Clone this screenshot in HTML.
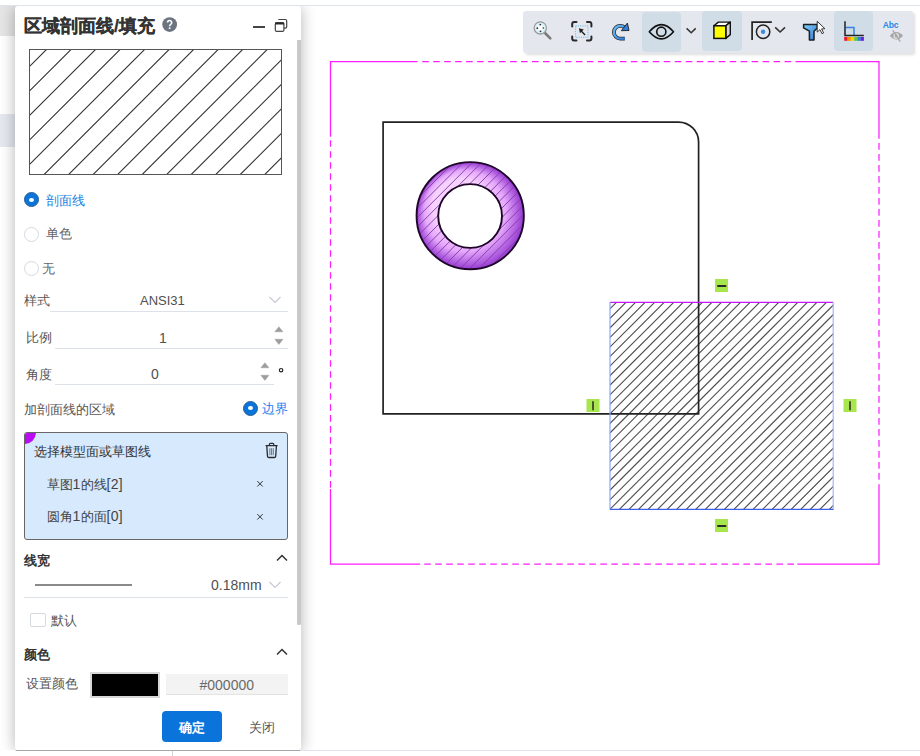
<!DOCTYPE html>
<html><head><meta charset="utf-8">
<style>
*{margin:0;padding:0;box-sizing:border-box}
html,body{width:920px;height:756px;overflow:hidden;background:#fff;font-family:"Liberation Sans",sans-serif;color:#333}
.a{position:absolute;white-space:nowrap}
#topline{left:0;top:0;width:920px;height:6px;background:#fff;border-bottom:1px solid #dfe4ea;z-index:5}
#botline{left:15px;top:750px;width:905px;height:6px;background:#fff;border-top:1px solid #e1e2ea;z-index:5}
#botwhite{left:0;top:750px;width:15px;height:6px;background:#fff;z-index:5}
#botdark{left:16px;top:750px;width:284px;height:1px;background:#a4a6aa;z-index:6}
#vline{left:172px;top:751px;width:1px;height:5px;background:#d4d4d4}
#sb1{left:0;top:6px;width:20px;height:30px;background:#e5e5e5}
#sb2{left:0;top:114px;width:20px;height:33px;background:#e5e8ef}
#panel{left:15px;top:6px;width:286px;height:744px;background:#fff;border-radius:3px;box-shadow:0 1px 15px rgba(0,0,0,.3)}
#toolbar{left:523px;top:11px;width:389.5px;height:42px;background:#e4e7ee;border-radius:3px 2px 2px 3px;box-shadow:2px 2px 3px rgba(0,0,0,.13)}
.hl{position:absolute;background:#d0dce6;border-radius:4px}
.c{font-size:13px;line-height:16px;color:#555}
.l{font-size:14px;line-height:16px;color:#505050}
.b{font-weight:bold;color:#333}
.ul{position:absolute;height:1px;background:#dde2ea}
.radio{position:absolute;width:15px;height:15px;border-radius:50%;border:1px solid #d5d9e0;background:#fff}
.radio.on{background:#0a74da;border:1px solid #2a5f94}
.radio.on:after{content:"";position:absolute;left:4.1px;top:4.6px;width:4.8px;height:4px;border-radius:50%;background:#fff}
.chev{position:absolute}
.l14{font-size:14px;letter-spacing:0.3px}
</style></head><body>
<div class="a" id="topline"></div>
<div class="a" id="sb1"></div>
<div class="a" id="sb2"></div>

<!-- canvas -->
<svg class="a" style="left:0;top:0" width="920" height="756">
  <defs>
    <clipPath id="csq"><rect x="610" y="302.4" width="223.2" height="207"/></clipPath>
    <clipPath id="cdn"><path d="M470.2 162.1 A53.6 53.6 0 1 1 470.2 269.3 A53.6 53.6 0 1 1 470.2 162.1 Z M470.1 184.1 A31.9 31.9 0 1 0 470.1 247.9 A31.9 31.9 0 1 0 470.1 184.1 Z" clip-rule="evenodd"/></clipPath>
    <radialGradient id="dg" cx="470" cy="216" r="54" gradientUnits="userSpaceOnUse" fx="450" fy="196">
      <stop offset="0.5" stop-color="#f7d2ff"/>
      <stop offset="0.75" stop-color="#e6a8fb"/>
      <stop offset="1" stop-color="#9536d2"/>
    </radialGradient>
  </defs>
  <g stroke="#ff1eff" stroke-width="1.25" fill="none">
    <path d="M330.5 136.7 V61.5 H417.4 M795.5 61.5 H879 V138.8 M879 484.2 V564 H797.4 M420.2 564 H330.5 V488.9"/>
    <path d="M422.20 61.50H428.80M433.18 61.50H439.78M444.16 61.50H450.76M455.14 61.50H461.74M466.12 61.50H472.72M477.10 61.50H483.70M488.08 61.50H494.68M499.06 61.50H505.66M510.04 61.50H516.64M521.02 61.50H527.62M532.00 61.50H538.60M542.98 61.50H549.58M553.96 61.50H560.56M564.94 61.50H571.54M575.92 61.50H582.52M586.90 61.50H593.50M597.88 61.50H604.48M608.86 61.50H615.46M619.84 61.50H626.44M630.82 61.50H637.42M641.80 61.50H648.40M652.78 61.50H659.38M663.76 61.50H670.36M674.74 61.50H681.34M685.72 61.50H692.32M696.70 61.50H703.30M707.68 61.50H714.28M718.66 61.50H725.26M729.64 61.50H736.24M740.62 61.50H747.22M751.60 61.50H758.20M762.58 61.50H769.18M773.56 61.50H780.16M784.54 61.50H791.14M879.00 143.10V149.70M879.00 154.10V160.70M879.00 165.10V171.70M879.00 176.10V182.70M879.00 187.10V193.70M879.00 198.10V204.70M879.00 209.10V215.70M879.00 220.10V226.70M879.00 231.10V237.70M879.00 242.10V248.70M879.00 253.10V259.70M879.00 264.10V270.70M879.00 275.10V281.70M879.00 286.10V292.70M879.00 297.10V303.70M879.00 308.10V314.70M879.00 319.10V325.70M879.00 330.10V336.70M879.00 341.10V347.70M879.00 352.10V358.70M879.00 363.10V369.70M879.00 374.10V380.70M879.00 385.10V391.70M879.00 396.10V402.70M879.00 407.10V413.70M879.00 418.10V424.70M879.00 429.10V435.70M879.00 440.10V446.70M879.00 451.10V457.70M879.00 462.10V468.70M879.00 473.10V479.70M424.20 564.00H430.80M435.21 564.00H441.81M446.21 564.00H452.81M457.22 564.00H463.82M468.22 564.00H474.82M479.23 564.00H485.83M490.24 564.00H496.84M501.24 564.00H507.84M512.25 564.00H518.85M523.25 564.00H529.85M534.26 564.00H540.86M545.27 564.00H551.87M556.27 564.00H562.87M567.28 564.00H573.88M578.28 564.00H584.88M589.29 564.00H595.89M600.30 564.00H606.90M611.30 564.00H617.90M622.31 564.00H628.91M633.31 564.00H639.91M644.32 564.00H650.92M655.33 564.00H661.93M666.33 564.00H672.93M677.34 564.00H683.94M688.34 564.00H694.94M699.35 564.00H705.95M710.36 564.00H716.96M721.36 564.00H727.96M732.37 564.00H738.97M743.37 564.00H749.97M754.38 564.00H760.98M765.39 564.00H771.99M776.39 564.00H782.99M787.40 564.00H794.00M330.50 140.20V146.80M330.50 151.20V157.80M330.50 162.19V168.79M330.50 173.19V179.79M330.50 184.19V190.79M330.50 195.19V201.78M330.50 206.18V212.78M330.50 217.18V223.78M330.50 228.18V234.78M330.50 239.17V245.77M330.50 250.17V256.77M330.50 261.17V267.77M330.50 272.16V278.76M330.50 283.16V289.76M330.50 294.16V300.76M330.50 305.15V311.75M330.50 316.15V322.75M330.50 327.15V333.75M330.50 338.15V344.75M330.50 349.14V355.74M330.50 360.14V366.74M330.50 371.14V377.74M330.50 382.13V388.73M330.50 393.13V399.73M330.50 404.13V410.73M330.50 415.12V421.73M330.50 426.12V432.72M330.50 437.12V443.72M330.50 448.12V454.72M330.50 459.11V465.71M330.50 470.11V476.71M330.50 481.11V487.71"/>
  </g>
  <path clip-path="url(#csq)" d="M394.86 514.40L611.86 297.40M404.40 514.40L621.40 297.40M413.94 514.40L630.94 297.40M423.49 514.40L640.49 297.40M433.03 514.40L650.03 297.40M442.58 514.40L659.58 297.40M452.12 514.40L669.12 297.40M461.67 514.40L678.67 297.40M471.22 514.40L688.22 297.40M480.76 514.40L697.76 297.40M490.30 514.40L707.30 297.40M499.85 514.40L716.85 297.40M509.39 514.40L726.39 297.40M518.94 514.40L735.94 297.40M528.49 514.40L745.49 297.40M538.03 514.40L755.03 297.40M547.57 514.40L764.57 297.40M557.12 514.40L774.12 297.40M566.67 514.40L783.67 297.40M576.21 514.40L793.21 297.40M585.75 514.40L802.75 297.40M595.30 514.40L812.30 297.40M604.84 514.40L821.84 297.40M614.39 514.40L831.39 297.40M623.94 514.40L840.94 297.40M633.48 514.40L850.48 297.40M643.02 514.40L860.02 297.40M652.57 514.40L869.57 297.40M662.11 514.40L879.11 297.40M671.66 514.40L888.66 297.40M681.21 514.40L898.21 297.40M690.75 514.40L907.75 297.40M700.29 514.40L917.29 297.40M709.84 514.40L926.84 297.40M719.38 514.40L936.38 297.40M728.93 514.40L945.93 297.40M738.48 514.40L955.48 297.40M748.02 514.40L965.02 297.40M757.56 514.40L974.56 297.40M767.11 514.40L984.11 297.40M776.65 514.40L993.65 297.40M786.20 514.40L1003.20 297.40M795.75 514.40L1012.75 297.40M805.29 514.40L1022.29 297.40M814.83 514.40L1031.84 297.40M824.38 514.40L1041.38 297.40M833.92 514.40L1050.92 297.40" stroke="#4e4e4e" stroke-width="1.12" fill="none"/>
  <path d="M383.1 122.1 H678.6 A20 20 0 0 1 698.6 142.1 V413.8 H383.1 Z" fill="none" stroke="#222" stroke-width="1.7"/>
  <line x1="610" y1="302.4" x2="833" y2="302.4" stroke="#c814ff" stroke-width="1.3"/>
  <line x1="610" y1="302" x2="610" y2="509.5" stroke="#8aa6ff" stroke-width="1.2"/>
  <line x1="833.2" y1="302" x2="833.2" y2="509.5" stroke="#a3b8ff" stroke-width="1.2"/>
  <line x1="610" y1="509.4" x2="833.5" y2="509.4" stroke="#3c5ee8" stroke-width="1.2"/>
  <path d="M470.2 162.1 A53.6 53.6 0 1 1 470.2 269.3 A53.6 53.6 0 1 1 470.2 162.1 Z M470.1 184.1 A31.9 31.9 0 1 0 470.1 247.9 A31.9 31.9 0 1 0 470.1 184.1 Z" fill="url(#dg)" fill-rule="evenodd"/>
  <path clip-path="url(#cdn)" d="M294.00 275.00L412.00 157.00M303.40 275.00L421.40 157.00M312.80 275.00L430.80 157.00M322.20 275.00L440.20 157.00M331.60 275.00L449.60 157.00M341.00 275.00L459.00 157.00M350.40 275.00L468.40 157.00M359.80 275.00L477.80 157.00M369.20 275.00L487.20 157.00M378.60 275.00L496.60 157.00M388.00 275.00L506.00 157.00M397.40 275.00L515.40 157.00M406.80 275.00L524.80 157.00M416.20 275.00L534.20 157.00M425.60 275.00L543.60 157.00M435.00 275.00L553.00 157.00M444.40 275.00L562.40 157.00M453.80 275.00L571.80 157.00M463.20 275.00L581.20 157.00M472.60 275.00L590.60 157.00M482.00 275.00L600.00 157.00M491.40 275.00L609.40 157.00M500.80 275.00L618.80 157.00M510.20 275.00L628.20 157.00M519.60 275.00L637.60 157.00" stroke="#8240aa" stroke-width="0.95" fill="none"/>
  <path d="M470.2 162.1 A53.6 53.6 0 1 1 470.2 269.3 A53.6 53.6 0 1 1 470.2 162.1 Z M470.1 184.1 A31.9 31.9 0 1 0 470.1 247.9 A31.9 31.9 0 1 0 470.1 184.1 Z" fill="none" stroke="#1e0628" stroke-width="1.9"/>
  <g fill="#a8e64e">
    <rect x="715" y="279" width="13" height="13"/>
    <rect x="715" y="519" width="13" height="13"/>
    <rect x="586.5" y="399" width="13" height="13"/>
    <rect x="843.5" y="399" width="13" height="13"/>
  </g>
  <g stroke="#2a2a2a" stroke-width="2" stroke-linecap="round">
    <line x1="718" y1="286" x2="725.5" y2="286"/>
    <line x1="718" y1="526" x2="725.5" y2="526"/>
    <line x1="593" y1="402" x2="593" y2="409.5" stroke="#4a5530"/>
    <line x1="850" y1="402" x2="850" y2="409.5" stroke="#4a5530"/>
  </g>
</svg>

<div class="a" id="toolbar"></div>
<div class="hl" style="left:642px;top:12px;width:39px;height:40px"></div>
<div class="hl" style="left:702px;top:11.3px;width:40px;height:39.5px"></div>
<div class="hl" style="left:834px;top:11px;width:38.7px;height:39.6px"></div>
<svg class="a" style="left:0;top:0" width="920" height="60">
  <defs>
    <linearGradient id="rg" x1="0" y1="0" x2="1" y2="1"><stop offset="0" stop-color="#6cc0f4"/><stop offset="1" stop-color="#2c7ede"/></linearGradient>
    <linearGradient id="fg" x1="0" y1="0" x2="1" y2="1"><stop offset="0" stop-color="#84d0ff"/><stop offset="1" stop-color="#2c78d6"/></linearGradient>
  </defs>
  <!-- magnifier -->
  <line x1="545" y1="33" x2="550.3" y2="38.3" stroke="#7a7a7a" stroke-width="2.6" stroke-linecap="round"/>
  <circle cx="540.3" cy="27.9" r="6.1" fill="#dcf3fb" stroke="#9a9a9a" stroke-width="1.3"/>
  <circle cx="540.3" cy="27.9" r="2.6" fill="#fff"/>
  <g fill="#333"><circle cx="540.3" cy="24.6" r="0.9"/><circle cx="537.3" cy="28.2" r="0.9"/><circle cx="543.3" cy="28" r="0.8"/><circle cx="540.5" cy="31.3" r="0.9"/></g>
  <!-- select box -->
  <g fill="none" stroke="#2a2a2a" stroke-width="2" stroke-linecap="round">
    <path d="M572.2 26.5 V24 a2 2 0 0 1 2-2 H576.5"/>
    <path d="M587 22 H589.4 a2 2 0 0 1 2 2 V26.5"/>
    <path d="M591.4 36.5 V38.6 a2 2 0 0 1 -2 2 H587"/>
    <path d="M576.5 40.6 H574.2 a2 2 0 0 1 -2-2 V36.5"/>
  </g>
  <rect x="575.6" y="25.9" width="12.4" height="11.4" fill="none" stroke="#5ab4ee" stroke-width="1" stroke-dasharray="1 1.3"/>
  <path d="M578.9 28.2 L583.8 29.5 L582.2 31 L585.6 34.4 L584.6 35.4 L581.2 32 L579.9 33.3 Z" fill="#222"/>
  <!-- redo -->
  <path d="M624.8 38.6 H620.3 A6.4 6.4 0 0 1 620.3 25.8 Q622.8 25.8 624.6 27.4" fill="none" stroke="#2a2a2a" stroke-width="3.8" stroke-linecap="butt"/>
  <path d="M624.8 38.6 H620.3 A6.4 6.4 0 0 1 620.3 25.8 Q622.8 25.8 625 27.8" fill="none" stroke="url(#rg)" stroke-width="2.3"/>
  <path d="M621.3 30.7 L627.4 23.1 L629 30.5 Z" fill="#2e82de" stroke="#1e1e1e" stroke-width="0.9" stroke-linejoin="round"/>
  <!-- eye -->
  <path d="M649.3 31.8 Q661.3 17.5 673.5 31.8 Q661.3 46 649.3 31.8 Z" fill="none" stroke="#111" stroke-width="1.6" stroke-linejoin="round"/>
  <circle cx="661.3" cy="31.7" r="4.6" fill="none" stroke="#111" stroke-width="1.6"/>
  <path d="M686.6 28.4 L691.2 32.8 L695.7 28.4" fill="none" stroke="#333" stroke-width="1.5"/>
  <!-- cube -->
  <path d="M713.9 25.8 L718.4 22.1 H730.3 L725.8 25.8 Z" fill="#fff" stroke="#111" stroke-width="1.4" stroke-linejoin="round"/>
  <path d="M725.8 25.8 L730.3 22.1 V34.6 L725.8 38.4 Z" fill="#d6d6d6" stroke="#111" stroke-width="1.4" stroke-linejoin="round"/>
  <rect x="713.9" y="25.8" width="11.9" height="12.6" fill="#ffff00" stroke="#111" stroke-width="1.5"/>
  <!-- section -->
  <path d="M752.1 39.9 V22.1 H771.8" fill="none" stroke="#222" stroke-width="1.7"/>
  <circle cx="763.1" cy="31.8" r="6.7" fill="none" stroke="#222" stroke-width="1.5"/>
  <circle cx="763.1" cy="31.8" r="2.2" fill="#3a8ee0"/>
  <path d="M775.2 27.3 L780.1 32 L785 27.3" fill="none" stroke="#333" stroke-width="1.6"/>
  <!-- filter -->
  <path d="M803.6 24.4 H817.3 V28 L814 31.2 V40 H809.4 V31.2 L803.6 27.9 Z" fill="url(#fg)" stroke="#1e1e1e" stroke-width="1.5" stroke-linejoin="round"/>
  <path d="M817.2 21.3 L824.9 28.7 L821.6 28.9 L823.6 32.9 L822 33.7 L819.9 29.7 L817.2 32.1 Z" fill="#fff" stroke="#222" stroke-width="0.9" stroke-linejoin="round"/>
  <!-- axis -->
  <path d="M854 35 V27.6 H845.5" fill="none" stroke="#3a80e0" stroke-width="1.5"/>
  <path d="M845 21.2 V35.4 H863.8" fill="none" stroke="#222" stroke-width="1.5"/>
  <rect x="844.2" y="37" width="3.4" height="3.8" fill="#e8192c"/>
  <rect x="847.5" y="37" width="3.4" height="3.8" fill="#ff8c00"/>
  <rect x="850.8" y="37" width="3.4" height="3.8" fill="#ffd400"/>
  <rect x="854.1" y="37" width="3.4" height="3.8" fill="#6cc04a"/>
  <rect x="857.4" y="37" width="3.3" height="3.8" fill="#1a8ec8"/>
  <rect x="860.6" y="37" width="3.3" height="3.8" fill="#6a1fe0"/>
  <!-- Abc -->
  <text x="882.8" y="28.2" font-family="Liberation Sans" font-weight="bold" font-size="8.6" letter-spacing="-0.2" fill="#2a8ae8">Abc</text>
  <path d="M889.8 35.8 Q896.4 28.3 903 35.8 Q896.4 43.3 889.8 35.8 Z" fill="#a6a6a6"/>
  <circle cx="896.2" cy="35.9" r="2.9" fill="#d9d9d9"/>
  <circle cx="896.2" cy="35.9" r="1.4" fill="#a6a6a6"/>
  <line x1="892.8" y1="30.3" x2="900.3" y2="41.6" stroke="#a6a6a6" stroke-width="1.2"/>
</svg>

<div class="a" id="panel"></div>
<!-- panel content -->
<div class="a b" style="left:24px;top:14.3px;font-size:18px;line-height:24px;-webkit-text-stroke:0.25px #333">区域剖面线/填充</div>
<svg class="a" style="left:161px;top:16px" width="17" height="17"><circle cx="8.65" cy="8.6" r="7.4" fill="#6b7480"/><path d="M6.5 6.5 A2.1 2.1 0 1 1 9.9 8.2 Q8.6 8.9 8.6 10.3" fill="none" stroke="#fff" stroke-width="1.6"/><rect x="7.8" y="11.4" width="1.7" height="1.6" fill="#fff"/></svg>
<div class="a" style="left:252.5px;top:26px;width:12.5px;height:2px;background:#444"></div>
<svg class="a" style="left:272px;top:17px" width="18" height="17">
  <path d="M6.3 2.5 H13.3 a1.4 1.4 0 0 1 1.4 1.4 V9.8 a1.4 1.4 0 0 1 -1.4 1.4 H12" fill="none" stroke="#444" stroke-width="1.2"/>
  <rect x="3.3" y="5.8" width="8.6" height="8.6" rx="1.4" fill="#fff" stroke="#444" stroke-width="1.2"/>
  <rect x="3" y="5.3" width="9.2" height="2.3" rx="0.8" fill="#2a2a2a"/>
</svg>
<div class="a" style="left:297px;top:40px;width:4px;height:584.5px;background:#c9c9c9;border-radius:0 0 1.5px 1.5px"></div>

<svg class="a" style="left:0;top:0" width="300" height="180">
  <defs><clipPath id="cpb"><rect x="29.5" y="49.5" width="252" height="125"/></clipPath></defs>
  <path clip-path="url(#cpb)" d="M-108.02 179.50L26.98 44.50M-83.50 179.50L51.50 44.50M-58.98 179.50L76.02 44.50M-34.46 179.50L100.54 44.50M-9.94 179.50L125.06 44.50M14.58 179.50L149.58 44.50M39.10 179.50L174.10 44.50M63.62 179.50L198.62 44.50M88.14 179.50L223.14 44.50M112.66 179.50L247.66 44.50M137.18 179.50L272.18 44.50M161.70 179.50L296.70 44.50M186.22 179.50L321.22 44.50M210.74 179.50L345.74 44.50M235.26 179.50L370.26 44.50M259.78 179.50L394.78 44.50M284.30 179.50L419.30 44.50" stroke="#333" stroke-width="1.12" fill="none"/>
  <rect x="29.5" y="49.5" width="252" height="125" fill="none" stroke="#555" stroke-width="1"/>
</svg>

<div class="radio on" style="left:24px;top:192px"></div>
<div class="a c" style="left:46px;top:193px;color:#1a7fe0">剖面线</div>
<div class="radio" style="left:24px;top:226.5px"></div>
<div class="a c" style="left:46px;top:226.3px;color:#666">单色</div>
<div class="radio" style="left:24px;top:260.5px"></div>
<div class="a c" style="left:42px;top:261.2px;color:#666">无</div>

<div class="a c" style="left:24px;top:293px">样式</div>
<div class="a l" style="left:140px;top:292.5px;font-size:13px">ANSI31</div>
<svg class="a" style="left:268px;top:295px" width="14" height="10"><path d="M1.5 2 L7 7.5 L12.5 2" fill="none" stroke="#c5c9d1" stroke-width="1.1"/></svg>
<div class="ul" style="left:50px;top:311px;width:238px"></div>

<div class="a c" style="left:26px;top:330.4px">比例</div>
<div class="a l" style="left:159px;top:330.3px">1</div>
<svg class="a" style="left:274px;top:326px" width="10" height="20"><path d="M0.8 5.8 L4.9 0.8 L9 5.8 Z M0.8 13.2 L4.9 18.6 L9 13.2 Z" fill="#9d9d9d" stroke="#9d9d9d" stroke-width="0.4" stroke-linejoin="round"/></svg>
<div class="ul" style="left:55px;top:348px;width:233px"></div>

<div class="a c" style="left:26px;top:367px">角度</div>
<div class="a l" style="left:151px;top:365.5px">0</div>
<svg class="a" style="left:260px;top:362px" width="10" height="20"><path d="M0.8 5.8 L4.9 0.8 L9 5.8 Z M0.8 13.2 L4.9 18.4 L9 13.2 Z" fill="#9d9d9d" stroke="#9d9d9d" stroke-width="0.4" stroke-linejoin="round"/></svg>
<svg class="a" style="left:277px;top:366px" width="8" height="8"><circle cx="4.1" cy="4.2" r="1.7" fill="none" stroke="#222" stroke-width="1.2"/></svg>
<div class="ul" style="left:55px;top:384px;width:219px"></div>

<div class="a c" style="left:24px;top:402px">加剖面线的区域</div>
<div class="radio on" style="left:243.3px;top:400.6px"></div>
<div class="a c" style="left:262px;top:400.6px;color:#1a80f0">边界</div>

<div class="a" style="left:24px;top:432px;width:264px;height:108px;background:#d6e9fd;border:1px solid #666;border-radius:3px;overflow:hidden">
  <div style="position:absolute;left:-12px;top:-12px;width:23px;height:23px;border-radius:50%;background:#b70ff2"></div>
</div>
<div class="a c" style="left:33.5px;top:444px;color:#333">选择模型面或草图线</div>
<svg class="a" style="left:264px;top:442px" width="16" height="17">
  <path d="M1.6 3.6 H13.6 M5.4 3.6 V2.3 a1 1 0 0 1 1-1 H8.8 a1 1 0 0 1 1 1 V3.6" fill="none" stroke="#2a2a2a" stroke-width="1.2"/>
  <path d="M2.8 4 L3.5 14.2 a1.4 1.4 0 0 0 1.4 1.3 H10.3 a1.4 1.4 0 0 0 1.4-1.3 L12.4 4" fill="none" stroke="#2a2a2a" stroke-width="1.3"/>
  <path d="M5.9 6.2 V13.2 M7.6 6.2 V13.2 M9.3 6.2 V13.2" stroke="#666" stroke-width="0.9"/>
</svg>
<div class="a c" style="left:46.5px;top:475.8px;color:#444">草图<span class="l14">1</span>的线<span class="l14">[2]</span></div>
<svg class="a" style="left:255px;top:479px" width="10" height="10"><path d="M2.3 2.1 L7.7 7.5 M7.7 2.1 L2.3 7.5" stroke="#333" stroke-width="1"/></svg>
<div class="a c" style="left:46.5px;top:508.2px;color:#444">圆角<span class="l14">1</span>的面<span class="l14">[0]</span></div>
<svg class="a" style="left:255px;top:512px" width="10" height="10"><path d="M2.3 2.1 L7.7 7.5 M7.7 2.1 L2.3 7.5" stroke="#333" stroke-width="1"/></svg>

<div class="a c b" style="left:24px;top:553.3px">线宽</div>
<svg class="a" style="left:275px;top:553px" width="14" height="10"><path d="M2 7.5 L7 2.5 L12 7.5" fill="none" stroke="#333" stroke-width="1.5"/></svg>
<div class="a" style="left:35px;top:584px;width:97px;height:1.5px;background:#8a8a8a"></div>
<div class="a l" style="left:211px;top:576.7px">0.18mm</div>
<svg class="a" style="left:268px;top:580px" width="14" height="10"><path d="M1.5 2 L7 7.5 L12.5 2" fill="none" stroke="#c5c9d1" stroke-width="1.1"/></svg>
<div class="ul" style="left:24px;top:596.5px;width:264px"></div>

<div class="a" style="left:30px;top:612.5px;width:15.5px;height:14.5px;border:1px solid #d5d9e0;border-radius:2px"></div>
<div class="a c" style="left:50.5px;top:613.4px">默认</div>

<div class="a c b" style="left:24px;top:647px">颜色</div>
<svg class="a" style="left:275px;top:647px" width="14" height="10"><path d="M2 7.5 L7 2.5 L12 7.5" fill="none" stroke="#333" stroke-width="1.5"/></svg>
<div class="a c" style="left:25.6px;top:676.2px">设置颜色</div>
<div class="a" style="left:90px;top:672px;width:70px;height:26px;background:#000;border:2px solid #d8d8d8"></div>
<div class="a" style="left:166px;top:674px;width:122px;height:20.5px;background:#f3f3f3;border-bottom:1px solid #e3e3e3"></div>
<div class="a l" style="left:199.5px;top:677px;color:#6a6a6a">#000000</div>

<div class="a" style="left:162px;top:711px;width:60px;height:31px;background:#0a74da;border-radius:4px"></div>
<div class="a c b" style="left:178.5px;top:719.9px;color:#fff">确定</div>
<div class="a c" style="left:248.7px;top:719.9px">关闭</div>

<div class="a" id="botline"></div>
<div class="a" id="botwhite"></div>
<div class="a" id="botdark"></div>
<div class="a" id="vline" style="z-index:7"></div>
</body></html>
